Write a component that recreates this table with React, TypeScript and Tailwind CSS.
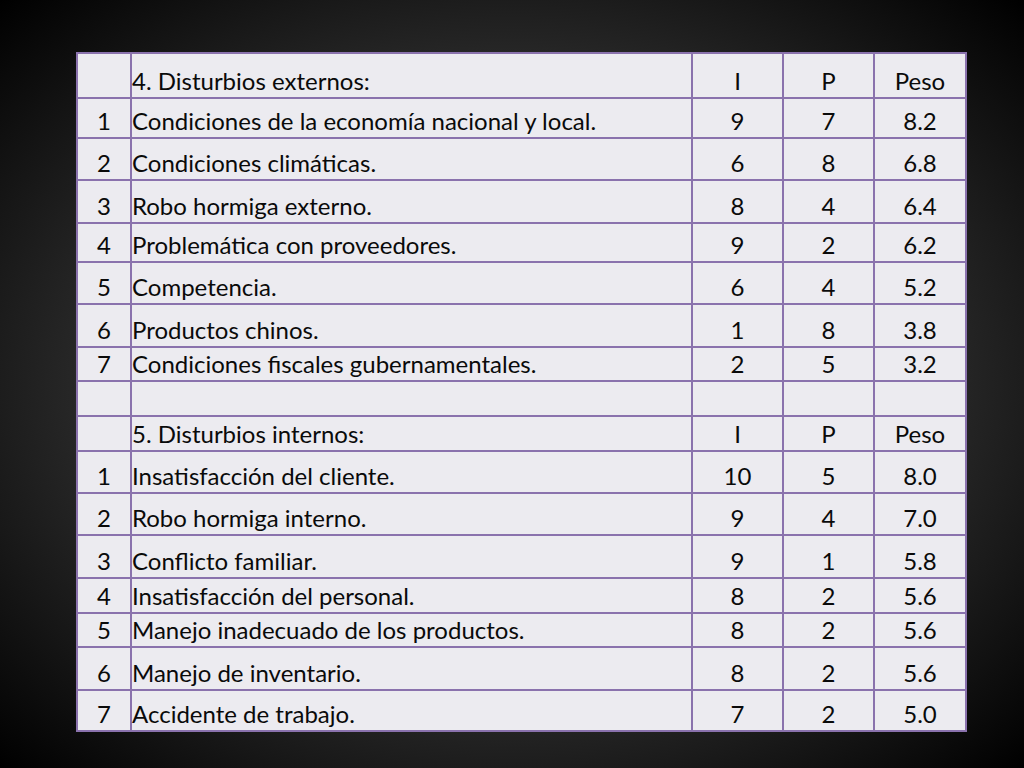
import React from "react";

type Row = { n: string; label: string; i: string; p: string; peso: string; h: number };

const rows: Row[] = [
  { n: "", label: "4. Disturbios externos:", i: "I", p: "P", peso: "Peso", h: 45 },
  { n: "1", label: "Condiciones de la economía nacional y local.", i: "9", p: "7", peso: "8.2", h: 40 },
  { n: "2", label: "Condiciones climáticas.", i: "6", p: "8", peso: "6.8", h: 42 },
  { n: "3", label: "Robo hormiga externo.", i: "8", p: "4", peso: "6.4", h: 43 },
  { n: "4", label: "Problemática con proveedores.", i: "9", p: "2", peso: "6.2", h: 39 },
  { n: "5", label: "Competencia.", i: "6", p: "4", peso: "5.2", h: 42 },
  { n: "6", label: "Productos chinos.", i: "1", p: "8", peso: "3.8", h: 43 },
  { n: "7", label: "Condiciones fiscales gubernamentales.", i: "2", p: "5", peso: "3.2", h: 34 },
  { n: "", label: "", i: "", p: "", peso: "", h: 35 },
  { n: "", label: "5. Disturbios internos:", i: "I", p: "P", peso: "Peso", h: 35 },
  { n: "1", label: "Insatisfacción del cliente.", i: "10", p: "5", peso: "8.0", h: 42 },
  { n: "2", label: "Robo hormiga interno.", i: "9", p: "4", peso: "7.0", h: 42 },
  { n: "3", label: "Conflicto familiar.", i: "9", p: "1", peso: "5.8", h: 43 },
  { n: "4", label: "Insatisfacción del personal.", i: "8", p: "2", peso: "5.6", h: 35 },
  { n: "5", label: "Manejo inadecuado de los productos.", i: "8", p: "2", peso: "5.6", h: 34 },
  { n: "6", label: "Manejo de inventario.", i: "8", p: "2", peso: "5.6", h: 43 },
  { n: "7", label: "Accidente de trabajo.", i: "7", p: "2", peso: "5.0", h: 41 },
];

const cell = "border-2 border-[#8a72ad] align-bottom p-0 pb-[4px] leading-none";

export default function App() {
  return (
    <div className="w-[1024px] h-[768px] overflow-hidden bg-[radial-gradient(ellipse_at_center,#5c5c5c_0%,#2c2c2c_55%,#000000_100%)] pt-[52px] pl-[76px] font-['Lato',sans-serif] text-[24px] text-[#0a0a0a]">
      <table className="border-collapse bg-[#ecebf0] table-fixed w-[889px]">
        <colgroup>
          <col className="w-[54px]" />
          <col className="w-[561px]" />
          <col className="w-[91px]" />
          <col className="w-[91px]" />
          <col className="w-[92px]" />
        </colgroup>
        <tbody>
          {rows.map((r, idx) => (
            <tr key={idx} style={{ height: r.h }}>
              <td className={`${cell} text-center`}>{r.n}</td>
              <td className={`${cell} whitespace-nowrap`}>{r.label}</td>
              <td className={`${cell} text-center`}>{r.i}</td>
              <td className={`${cell} text-center`}>{r.p}</td>
              <td className={`${cell} text-center`}>{r.peso}</td>
            </tr>
          ))}
        </tbody>
      </table>
    </div>
  );
}
